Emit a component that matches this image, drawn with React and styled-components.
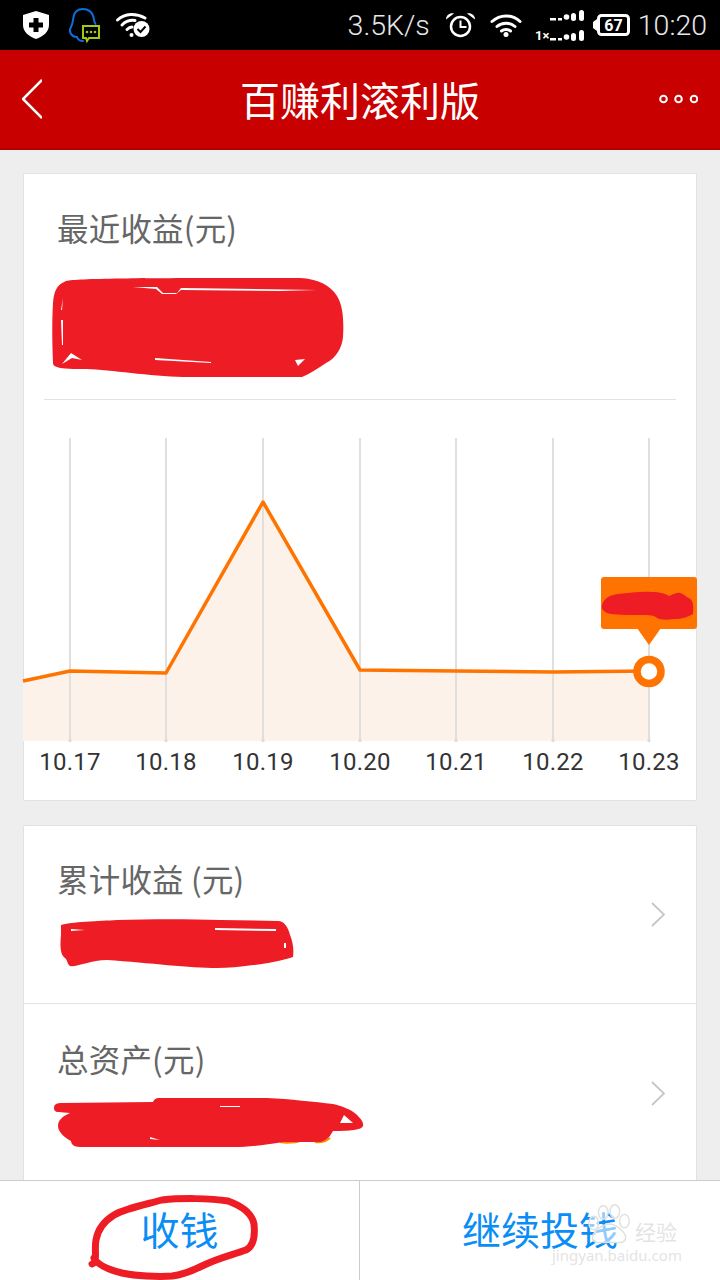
import React from 'react';
import styled, { createGlobalStyle } from 'styled-components';

const GlobalStyle = createGlobalStyle`
  html, body {
    margin: 0;
    padding: 0;
    background: #eeeeee;
  }
  body {
    font-family: "Noto Sans CJK SC", "Noto Sans", sans-serif;
  }
`;

const Page = styled.div`
  position: relative;
  display: flex;
  flex-direction: column;
  width: 720px;
  height: 1280px;
  overflow: hidden;
  background: #eeeeee;
`;

const StatusBar = styled.div`
  display: flex;
  flex: none;
  align-items: center;
  justify-content: space-between;
  height: 50px;
  padding: 0 13px 0 23px;
  background: #000;
  color: #e8e8e8;
  font-family: Roboto, sans-serif;
  font-size: 28.5px;
  font-weight: 300;
`;

const StatusGroup = styled.div`
  display: flex;
  align-items: center;
`;

const StatusIcon = styled.svg`
  display: block;
  flex: none;
  margin-left: ${({ $left }) => $left || 0}px;
  overflow: visible;
`;

const Clock = styled.span`
  margin-left: 8px;
`;

const Header = styled.header`
  display: grid;
  flex: none;
  grid-template-columns: 1fr auto 1fr;
  align-items: center;
  box-sizing: border-box;
  height: 100px;
  padding: 0 22px;
  border-bottom: 2px solid #b40000;
  background: #c80000;
`;

const HeaderTitle = styled.h1`
  margin: 0;
  color: #fff;
  font-size: 40px;
  font-weight: 400;
  line-height: 50px;
`;

const HeaderSide = styled.div`
  display: flex;
  justify-content: ${({ $end }) => ($end ? 'flex-end' : 'flex-start')};
`;

const Main = styled.main`
  display: flex;
  flex: 1;
  flex-direction: column;
  gap: 24px;
  min-height: 0;
  overflow: hidden;
  padding: 23px 23px 0;
`;

const Card = styled.section`
  flex: none;
  border: 1px solid #e2e2e2;
  border-radius: 2px;
  background: #fff;
`;

const Label = styled.div`
  margin-left: ${({ $left }) => $left}px;
  padding-bottom: 6px;
  color: #666;
  font-size: 31.5px;
  letter-spacing: 0.2px;
  line-height: 34px;
  white-space: pre;
`;

const SummaryBlock = styled.div`
  padding-top: 36px;
`;

const Divider = styled.div`
  height: 1px;
  margin: 21px 20px 0;
  background: #e2e2e2;
`;

const Row = styled.div`
  display: flex;
  align-items: center;
  justify-content: space-between;
  height: ${({ $height }) => $height}px;
  padding-right: 31px;
  border-bottom: ${({ $last }) => ($last ? 'none' : '1px solid #e2e2e2')};
`;

const RowBody = styled.div`
  align-self: flex-start;
  padding-top: ${({ $top }) => $top}px;
`;

const ScribbleSvg = styled.svg`
  display: block;
  margin-top: ${({ $top }) => $top}px;
  margin-left: ${({ $left }) => $left}px;
`;

const Chart = styled.svg`
  display: block;
  overflow: visible;
`;

const AxisLabel = styled.text`
  fill: #333;
  font-family: Roboto, sans-serif;
  font-size: 24px;
  letter-spacing: 0.2px;
  text-anchor: middle;
`;

const Footer = styled.footer`
  position: relative;
  display: grid;
  flex: none;
  grid-template-columns: 359px 1fr;
  box-sizing: border-box;
  height: 100px;
  border-top: 1px solid #cccccc;
  background: #fff;
`;

const FooterButton = styled.button`
  padding: 0 0 6px;
  border: none;
  border-left: ${({ $divided }) => ($divided ? '1px solid #cccccc' : 'none')};
  background: transparent;
  color: #0a8ef5;
  font-family: inherit;
  font-size: 39px;
  line-height: 50px;
`;

const RingOverlay = styled.svg`
  position: absolute;
  top: 13px;
  left: 84px;
  pointer-events: none;
`;

const Watermark = styled.div`
  position: absolute;
  top: 21px;
  left: 552px;
  width: 130px;
  height: 64px;
  color: rgba(222, 222, 222, 0.85);
  pointer-events: none;
`;

const WatermarkPaw = styled.svg`
  position: absolute;
  top: 0;
  left: 33px;
`;

const WatermarkWord = styled.div`
  position: absolute;
  top: 17px;
  left: 83px;
  font-size: 21px;
  line-height: 24px;
  white-space: nowrap;
`;

const WatermarkUrl = styled.div`
  position: absolute;
  top: 42px;
  left: 0;
  font-family: "Noto Sans", sans-serif;
  font-size: 15px;
  line-height: 22px;
  white-space: nowrap;
`;

const RED = '#ee1c25';
const ORANGE = '#ff7300';

const points = [
  [23, 681], [70, 671], [166, 673], [263, 502], [360, 670], [456, 671], [553, 672], [649, 671],
];

const ticks = [
  { x: 70, label: '10.17' },
  { x: 166, label: '10.18' },
  { x: 263, label: '10.19' },
  { x: 360, label: '10.20' },
  { x: 456, label: '10.21' },
  { x: 553, label: '10.22' },
  { x: 649, label: '10.23' },
];

const toPath = (list) => list.map((p, i) => `${i ? 'L' : 'M'}${p[0]} ${p[1]}`).join(' ');

const Scribble = ({ box, left, top, shape, gaps = [], sparks = [] }) => (
  <ScribbleSvg
    width={box[2]}
    height={box[3]}
    viewBox={box.join(' ')}
    $left={left}
    $top={top}
  >
    {sparks.map((d) => <path key={d} d={d} fill="none" stroke="#ff8a00" strokeWidth="2" />)}
    <path d={shape} fill={RED} />
    {gaps.map((d) => <path key={d} d={d} fill="#fff" />)}
  </ScribbleSvg>
);

const ShieldIcon = () => (
  <StatusIcon width="26" height="28" viewBox="0 0 26 28">
    <path d="M13 0 L26 4 V14 C26 21 20 25.500 13 28 C6 25.500 0 21 0 14 V4 Z" fill="#fff" />
    <path d="M10.500 7 H15.500 V11.500 H20 V16.500 H15.500 V21 H10.500 V16.500 H6 V11.500 H10.500 Z" fill="#000" />
  </StatusIcon>
);

const QqIcon = () => (
  <StatusIcon width="31" height="34" viewBox="0 0 31 34" $left={20}>
    <path
      d="M14 33 C11 33 9 32 8 29 C6 29 3 28 1.500 25 C0.500 23 0.500 21 2 19 C4 15 4 12 4.500 9 C5.500 3 10 1 14 1 C19 1 23.500 4 24.500 9 C25 12 25 14 26.500 16"
      fill="none"
      stroke="#0a6fe0"
      strokeWidth="2"
      strokeLinecap="round"
    />
    <path d="M14 18 H30 V30 H20 L18 33 L17 30 H14 Z" fill="#000" stroke="#a4c914" strokeWidth="2" />
    <circle cx="18" cy="24" r="1.300" fill="#a4c914" />
    <circle cx="22" cy="24" r="1.300" fill="#a4c914" />
    <circle cx="26" cy="24" r="1.300" fill="#a4c914" />
  </StatusIcon>
);

const WifiCheckIcon = () => (
  <StatusIcon width="34" height="24" viewBox="0 0 34 24" $left={16}>
    <g fill="none" stroke="#fff" strokeWidth="3" strokeLinecap="round">
      <path d="M1.500 7 C9 0 20 0 29 5" />
      <path d="M6 12 C10 8 15 7 19 7.500" />
      <path d="M11 16.500 C12.500 15 14 14 16 14" />
    </g>
    <circle cx="15.500" cy="22" r="2" fill="#fff" />
    <circle cx="25.500" cy="16" r="8" fill="#fff" />
    <path d="M21.500 16 L24.500 19 L29.500 13.500" fill="none" stroke="#000" strokeWidth="2" />
  </StatusIcon>
);

const AlarmIcon = () => (
  <StatusIcon width="29" height="24" viewBox="0 0 29 24" $left={16}>
    <circle cx="14.500" cy="13.500" r="9.500" fill="none" stroke="#fff" strokeWidth="2.500" />
    <path d="M14.500 7.500 V14 H20.500" fill="none" stroke="#fff" strokeWidth="2" />
    <path d="M0 6.500 C0 2 4 -0.500 8 0.500 Z" fill="#fff" />
    <path d="M29 6.500 C29 2 25 -0.500 21 0.500 Z" fill="#fff" />
  </StatusIcon>
);

const WifiIcon = () => (
  <StatusIcon width="32" height="24" viewBox="0 0 32 24" $left={15}>
    <g fill="none" stroke="#fff" strokeWidth="3" strokeLinecap="round">
      <path d="M2 8.500 C10 1 22 1 30 8.500" />
      <path d="M7 13.500 C12 9 20 9 25 13.500" />
      <path d="M11.500 18 C14 16 18 16 20.500 18" />
    </g>
    <circle cx="16" cy="21.500" r="2.500" fill="#fff" />
  </StatusIcon>
);

const SignalBars = ({ y }) => (
  <g fill="#fff" transform={`translate(0 ${y})`}>
    <rect x="15" y="8" width="6" height="2.500" />
    <rect x="23" y="8" width="4" height="2.500" />
    <circle cx="31.500" cy="7" r="2.800" />
    <rect x="36" y="3" width="5" height="8" rx="2.500" />
    <rect x="44" y="0" width="5" height="11" rx="2.500" />
  </g>
);

const SignalIcon = () => (
  <StatusIcon width="49" height="31" viewBox="0 0 49 31" $left={13}>
    <SignalBars y={0} />
    <SignalBars y={20} />
    <text x="0" y="30" fill="#fff" fontFamily="Roboto, sans-serif" fontSize="13" fontWeight="700">1×</text>
  </StatusIcon>
);

const BatteryIcon = () => (
  <StatusIcon width="37" height="22" viewBox="0 0 37 22" $left={9}>
    <path d="M0 8 L4 5 V17 L0 14 Z" fill="#fff" />
    <rect x="5.500" y="1.500" width="30" height="19" rx="3" fill="none" stroke="#fff" strokeWidth="3" />
    <text x="20.500" y="17" fill="#fff" fontFamily="Roboto, sans-serif" fontSize="16" fontWeight="700" textAnchor="middle">67</text>
  </StatusIcon>
);

const BackIcon = () => (
  <svg width="20" height="40" viewBox="0 0 20 40" style={{ display: 'block' }}>
    <path d="M20 1 L1 20 L20 39" fill="none" stroke="#fff" strokeWidth="2.500" />
  </svg>
);

const MoreIcon = () => (
  <svg width="39" height="10" viewBox="0 0 39 10" style={{ display: 'block' }}>
    {[4.500, 19.500, 35].map((cx) => (
      <circle key={cx} cx={cx} cy="5" r="3.300" fill="none" stroke="#fff" strokeWidth="2" />
    ))}
  </svg>
);

const Chevron = () => (
  <svg width="14" height="25" viewBox="0 0 14 25" style={{ display: 'block' }}>
    <path d="M1 1 L13 12.500 L1 24" fill="none" stroke="#c6c6c6" strokeWidth="1.800" />
  </svg>
);

const PriceChart = () => (
  <Chart width="672" height="400" viewBox="24 400 672 400">
    <path d={`${toPath(points)} L649 741 L23 741 Z`} fill="#fdf2e9" />
    {ticks.map((t) => (
      <g key={t.x}>
        <line x1={t.x} x2={t.x} y1="438" y2="741" stroke="#e2dedb" strokeWidth="2" />
        <rect x={t.x - 1.500} y="739" width="3" height="3" fill="#dddddd" />
        <AxisLabel x={t.x} y="770">{t.label}</AxisLabel>
      </g>
    ))}
    <path d={toPath(points)} fill="none" stroke={ORANGE} strokeWidth="3.500" strokeLinejoin="round" />
    <circle cx="649" cy="671.500" r="12" fill="#fff" stroke={ORANGE} strokeWidth="7.500" />
    <rect x="601" y="577" width="96" height="52" rx="3" fill={ORANGE} />
    <path d="M637 628 H661 L649 645 Z" fill={ORANGE} />
    <path
      d="M602 605 C604 598 610 595 618 594 C630 593 642 591 652 592 C660 592 666 594 669 596 C673 595 676 592 680 593 C684 594 686 597 689 598 C693 600 694 606 693 614 C688 617 682 619 674 619 C668 620 660 620 657 618 C654 615 650 615 640 615 C628 615 614 615 607 613 C603 611 601 608 602 605 Z"
      fill={RED}
    />
  </Chart>
);

export default function App() {
  return (
    <Page>
      <GlobalStyle />
      <StatusBar>
        <StatusGroup>
          <ShieldIcon />
          <QqIcon />
          <WifiCheckIcon />
        </StatusGroup>
        <StatusGroup>
          <span>3.5K/s</span>
          <AlarmIcon />
          <WifiIcon />
          <SignalIcon />
          <BatteryIcon />
          <Clock>10:20</Clock>
        </StatusGroup>
      </StatusBar>

      <Header>
        <HeaderSide><BackIcon /></HeaderSide>
        <HeaderTitle>百赚利滚利版</HeaderTitle>
        <HeaderSide $end><MoreIcon /></HeaderSide>
      </Header>

      <Main>
        <Card>
          <SummaryBlock>
            <Label $left={33}>最近收益(元)</Label>
            <Scribble
              box={[52, 278, 292, 100]}
              left={28}
              top={28}
              shape="M53 363 C52 340 52 320 53 303 C54 292 56 285 66 281 C80 278 150 278 300 278 C318 279 330 285 337 296 C343 306 344 320 343 337 C342 348 336 358 326 363 C318 368 310 374 302 377 L183 377 C150 376 110 370 87 369 C75 369 62 369 57 367 C54 366 53 365 53 363 Z"
              gaps={[
                'M133 287 L157 287 L163 293 L177 293 L181 288 L317 290 L280 291 L181 290 L176 294 L162 294 L156 289 Z',
                'M61 310 L63 298 L62 310 Z',
                'M61 320 L63 320 L63 345 L62 345 Z',
                'M62 364 L71 353 L82 360 L72 358 Z',
                'M295 360 L305 359 L298 366 Z',
                'M155 358 L211 362 L211 363 L155 360 Z',
              ]}
            />
            <Divider />
          </SummaryBlock>
          <PriceChart />
        </Card>

        <Card>
          <Row $height={177}>
            <RowBody $top={35}>
              <Label $left={33}>累计收益 (元)</Label>
              <Scribble
                box={[60, 919, 234, 50]}
                left={36}
                top={18}
                shape="M61 925 C70 922 100 921 117 920 C150 919 190 919 220 920 L278 921 C284 921 288 927 290 935 C293 942 294 950 293 957 C280 961 265 964 253 965 C240 967 228 968 217 968 C190 968 150 963 107 960 C90 960 75 968 70 966 C67 964 68 961 65 958 C60 955 60 945 61 935 Z"
                gaps={['M71 929 L85 930 L71 931 Z', 'M215 928 L276 929 L276 931 L215 930 Z', 'M284 943 L286 943 L286 948 L284 948 Z']}
              />
            </RowBody>
            <Chevron />
          </Row>
          <Row $height={179} $last>
            <RowBody $top={37}>
              <Label $left={33}>总资产(元)</Label>
              <Scribble
                box={[54, 1098, 310, 50]}
                left={30}
                top={17}
                shape="M54 1108 C54 1104 57 1103 62 1103 L153 1102 C154 1100 155 1098 160 1098 L267 1098 C290 1099 315 1102 333 1104 C342 1106 350 1109 356 1114 C360 1118 364 1122 363 1126 C362 1130 350 1131 333 1131 C330 1136 328 1140 320 1142 L283 1142 C265 1145 250 1147 233 1147 L80 1147 C74 1147 71 1144 71 1141 C65 1138 58 1132 58 1126 C58 1120 63 1116 70 1113 L58 1112 C55 1112 54 1110 54 1108 Z"
                gaps={['M340 1123 L353 1123 L344 1115 Z', 'M150 1137 L160 1140 L150 1139 Z', 'M220 1106 L240 1106 L240 1107 L220 1107 Z']}
                sparks={['M280 1142 C285 1143 295 1143 300 1141', 'M315 1142 C320 1143 325 1142 330 1138']}
              />
            </RowBody>
            <Chevron />
          </Row>
        </Card>
      </Main>

      <Footer>
        <FooterButton>收钱</FooterButton>
        <FooterButton $divided>继续投钱</FooterButton>
        <RingOverlay width="180" height="88" viewBox="84 1194 180 88">
          <path
            d="M92 1264 C98 1262 94 1250 96 1240 C98 1228 106 1220 114 1215 C126 1208 148 1204 162 1200 C180 1198 210 1198 228 1201 C242 1206 252 1214 254 1224 C255 1234 254 1246 246 1250 C232 1255 218 1258 202 1266 C192 1271 182 1275 172 1276 C158 1277 136 1276 122 1273 C110 1270 98 1266 94 1258"
            fill="none"
            stroke={RED}
            strokeWidth="7"
            strokeLinecap="round"
          />
        </RingOverlay>
        <Watermark>
          <WatermarkPaw width="50" height="44" viewBox="0 0 52 44">
            <g fill="rgba(255,255,255,.55)" stroke="#e0e0e0" strokeWidth="1.500">
              <ellipse cx="9" cy="21" rx="5" ry="7" />
              <ellipse cx="19" cy="10" rx="5" ry="7" />
              <ellipse cx="31" cy="9" rx="5" ry="7" />
              <ellipse cx="41" cy="19" rx="5" ry="7" />
              <path d="M25 22 C33 22 44 32 42 38 C40 43 32 41 25 41 C18 41 10 43 8 38 C6 32 17 22 25 22 Z" />
            </g>
          </WatermarkPaw>
          <WatermarkWord>经验</WatermarkWord>
          <WatermarkUrl>jingyan.baidu.com</WatermarkUrl>
        </Watermark>
      </Footer>
    </Page>
  );
}
